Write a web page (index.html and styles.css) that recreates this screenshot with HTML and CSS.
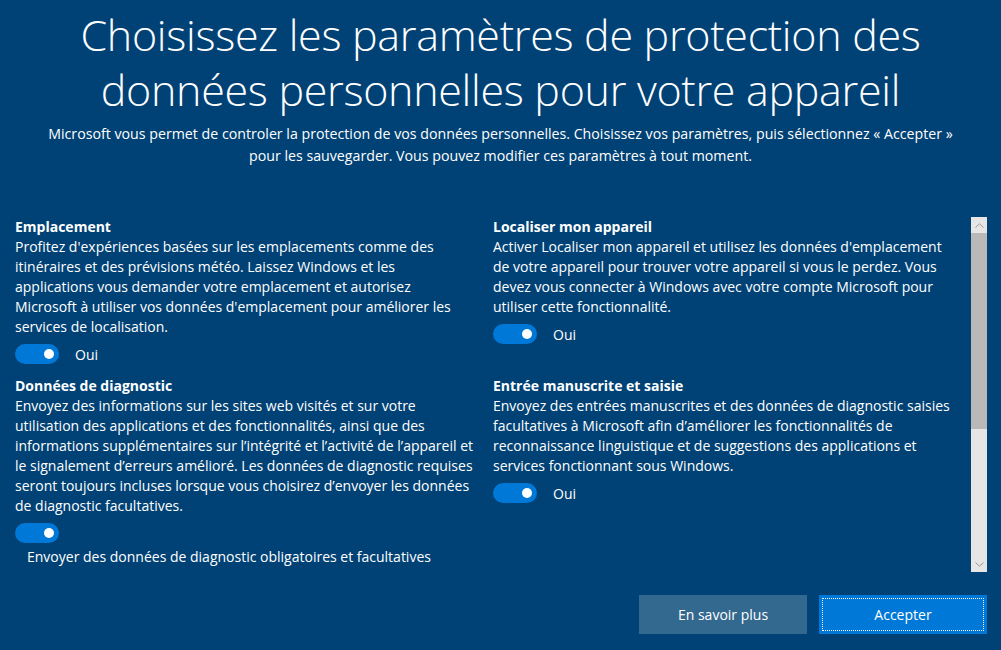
FILE: index.html
```html
<!DOCTYPE html>
<html lang="fr">
<head>
<meta charset="utf-8">
<title>Protection des données</title>
<link rel="stylesheet" href="styles.css">
</head>
<body>
<div class="page">
  <header class="header">
    <h1 class="title">Choisissez les paramètres de protection des<br>données personnelles pour votre appareil</h1>
    <p class="subtitle">Microsoft vous permet de controler la protection de vos données personnelles. Choisissez vos paramètres, puis sélectionnez « Accepter »<br>pour les sauvegarder. Vous pouvez modifier ces paramètres à tout moment.</p>
  </header>
  <div class="content">
    <div class="grid">
      <section class="setting">
        <h2 class="setting-title">Emplacement</h2>
        <p class="setting-text">Profitez d'expériences basées sur les emplacements comme des<br>itinéraires et des prévisions météo. Laissez Windows et les<br>applications vous demander votre emplacement et autorisez<br>Microsoft à utiliser vos données d'emplacement pour améliorer les<br>services de localisation.</p>
        <div class="toggle-row"><span class="toggle"><span class="knob"></span></span><span class="toggle-label">Oui</span></div>
      </section>
      <section class="setting">
        <h2 class="setting-title">Localiser mon appareil</h2>
        <p class="setting-text">Activer Localiser mon appareil et utilisez les données d'emplacement<br>de votre appareil pour trouver votre appareil si vous le perdez. Vous<br>devez vous connecter à Windows avec votre compte Microsoft pour<br>utiliser cette fonctionnalité.</p>
        <div class="toggle-row"><span class="toggle"><span class="knob"></span></span><span class="toggle-label">Oui</span></div>
      </section>
      <section class="setting">
        <h2 class="setting-title">Données de diagnostic</h2>
        <p class="setting-text">Envoyez des informations sur les sites web visités et sur votre<br>utilisation des applications et des fonctionnalités, ainsi que des<br>informations supplémentaires sur l’intégrité et l’activité de l’appareil et<br>le signalement d’erreurs amélioré. Les données de diagnostic requises<br>seront toujours incluses lorsque vous choisirez d’envoyer les données<br>de diagnostic facultatives.</p>
        <div class="toggle-row"><span class="toggle"><span class="knob"></span></span></div>
        <p class="toggle-desc">Envoyer des données de diagnostic obligatoires et facultatives</p>
      </section>
      <section class="setting">
        <h2 class="setting-title">Entrée manuscrite et saisie</h2>
        <p class="setting-text">Envoyez des entrées manuscrites et des données de diagnostic saisies<br>facultatives à Microsoft afin d’améliorer les fonctionnalités de<br>reconnaissance linguistique et de suggestions des applications et<br>services fonctionnant sous Windows.</p>
        <div class="toggle-row"><span class="toggle"><span class="knob"></span></span><span class="toggle-label">Oui</span></div>
      </section>
    </div>
    <div class="scrollbar">
      <div class="arrow arrow-up"><svg width="9" height="5" viewBox="0 0 9 5"><path d="M0.5 4.5 L4.5 0.8 L8.5 4.5" fill="none" stroke="#9a9a9a" stroke-width="1"/></svg></div>
      <div class="track"><div class="thumb"></div></div>
      <div class="arrow arrow-down"><svg width="9" height="5" viewBox="0 0 9 5"><path d="M0.5 0.5 L4.5 4.2 L8.5 0.5" fill="none" stroke="#9a9a9a" stroke-width="1"/></svg></div>
    </div>
  </div>
  <footer class="footer">
    <button class="btn btn-secondary" type="button">En savoir plus</button>
    <button class="btn btn-primary" type="button"><span class="focus">Accepter</span></button>
  </footer>
</div>
</body>
</html>
```
FILE: styles.css
```css
* { box-sizing: border-box; }
html, body { margin: 0; padding: 0; }
body {
  background: #004275;
  color: #ffffff;
  font-family: "Open Sans", "Noto Sans", sans-serif;
  width: 1001px;
  height: 650px;
  overflow: hidden;
}
.page { display: flex; flex-direction: column; height: 650px; }
.header { text-align: center; padding-top: 7px; }
.title {
  margin: 0;
  font-weight: 300;
  font-size: 43px;
  line-height: 55px;
  letter-spacing: -0.3px;
}
.subtitle {
  margin: 6px 0 0;
  font-size: 14.2px;
  line-height: 22px;
}
.content {
  display: flex;
  margin-top: 50px;
  padding-left: 15px;
  height: 355px;
}
.grid {
  width: 956px;
  display: grid;
  grid-template-columns: 478px 478px;
  grid-auto-rows: min-content;
  row-gap: 12px;
}
.setting-title {
  margin: 0;
  font-size: 14px;
  font-weight: 700;
  line-height: 20px;
}
.setting-text {
  margin: 0;
  font-size: 14px;
  line-height: 20px;
  white-space: nowrap;
}
.toggle-row {
  display: flex;
  align-items: center;
  margin-top: 7px;
  height: 20px;
}
.toggle {
  width: 44px;
  height: 20px;
  border-radius: 10px;
  background: #0078d7;
  display: flex;
  align-items: center;
  justify-content: flex-end;
  padding-right: 5px;
}
.knob { width: 10px; height: 10px; border-radius: 50%; background: #ffffff; }
.toggle-label { margin-left: 16px; font-size: 14px; }
.toggle-desc { margin: 4px 0 0 12px; font-size: 14px; line-height: 20px; }
.scrollbar {
  width: 16px;
  height: 355px;
  background: #e6e6e6;
  display: flex;
  flex-direction: column;
}
.arrow { height: 16px; display: flex; align-items: center; justify-content: center; }
.track { flex: 1; }
.thumb { height: 196px; background: #b9b9b9; }
.footer {
  display: flex;
  justify-content: flex-end;
  gap: 12px;
  padding-right: 14px;
  margin-top: 23px;
}
.btn {
  width: 168px;
  height: 39px;
  border: none;
  color: #ffffff;
  font-family: inherit;
  font-size: 14px;
  padding: 0;
}
.btn-secondary { background: #33688f; }
.btn-primary { background: #0078d7; padding: 3px; }
.focus {
  display: flex;
  align-items: center;
  justify-content: center;
  width: 100%;
  height: 100%;
  border: 1px dotted #ffffff;
}
```
